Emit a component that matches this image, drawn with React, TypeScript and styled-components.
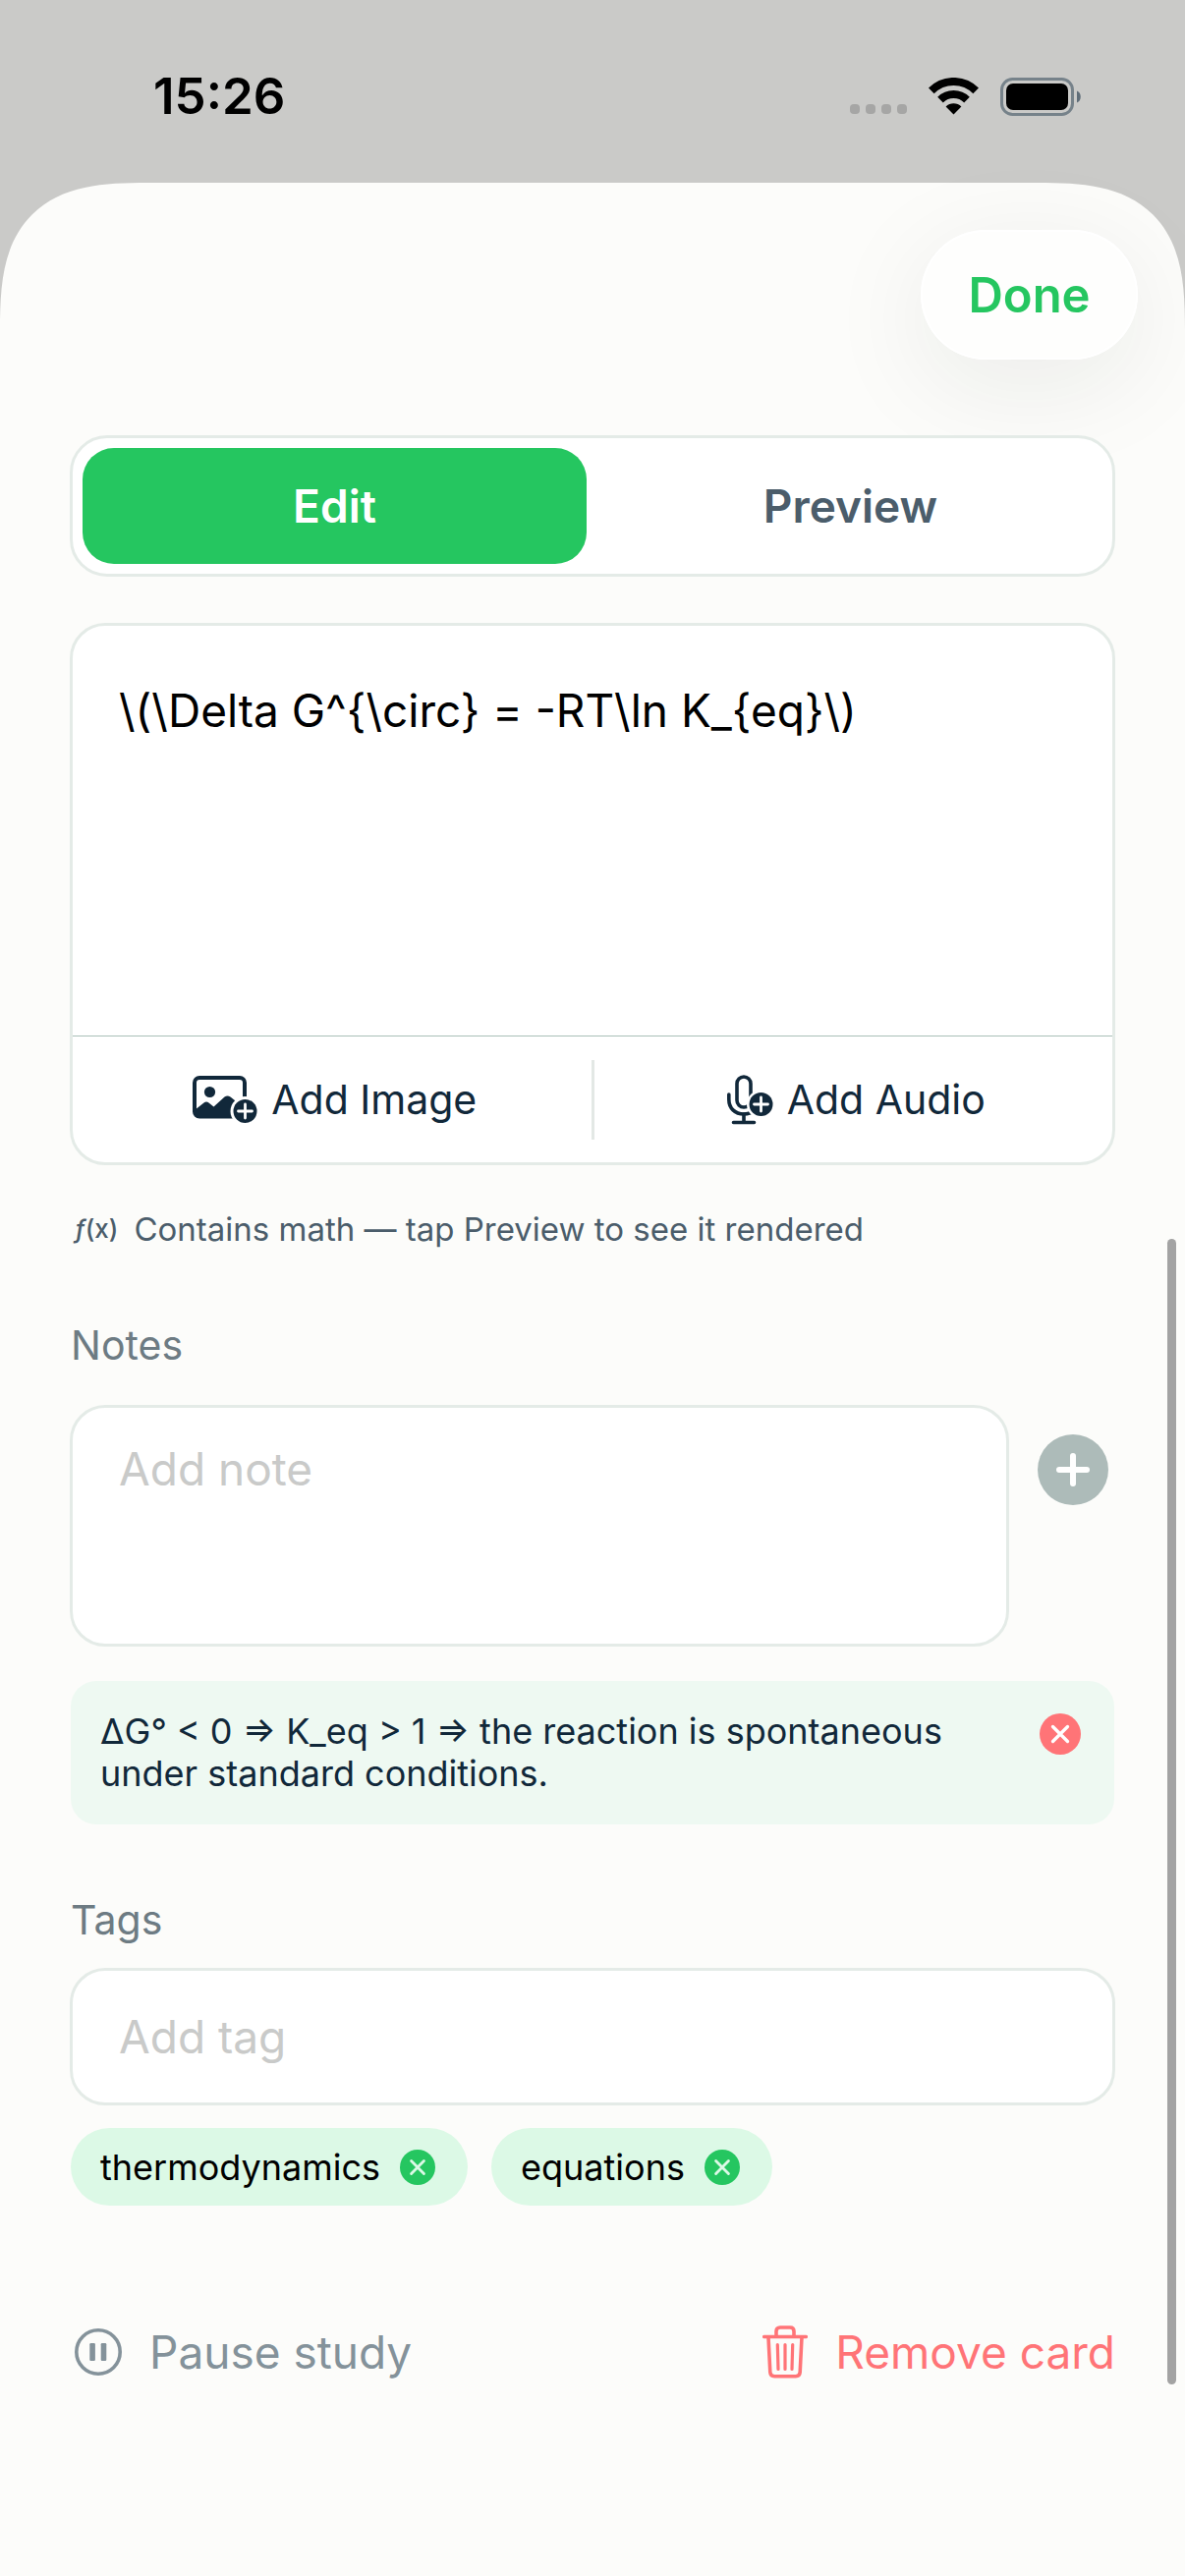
import React, { useState } from "react";
import styled, { createGlobalStyle, css } from "styled-components";

const color = {
  backdrop: "#cacac8",
  sheet: "#fcfcfa",
  line: "#e4ebe7",
  green: "#25c660",
  ink: "#11283a",
  slate: "#4b5d6b",
  label: "#6d7b83",
  muted: "#84929a",
  hint: "#c9cac9",
  coral: "#ff7477",
};

const GlobalStyle = createGlobalStyle`
  *, *::before, *::after { box-sizing: border-box; }
  body {
    margin: 0;
    background: ${color.backdrop};
    font-family: Inter, "Liberation Sans", sans-serif;
    color: #000;
  }
  button, input, textarea { font: inherit; color: inherit; margin: 0; }
  button { border: 0; padding: 0; background: none; cursor: pointer; }
  svg { display: block; flex: none; }
`;

const Screen = styled.div`
  position: relative;
  display: flex;
  flex-direction: column;
  min-height: 100vh;
`;

const StatusBar = styled.header`
  display: flex;
  align-items: center;
  justify-content: space-between;
  height: 186px;
  padding: 10px 105px 0 156px;
`;

const Clock = styled.time`
  font-size: 51px;
  line-height: 60px;
  font-weight: 600;
`;

const StatusIcons = styled.div`
  display: flex;
  align-items: center;
  gap: 22px;
`;

const Sheet = styled.main`
  flex: 1;
  background: ${color.sheet};
  border-radius: 112px 112px 0 0;
  @supports (corner-shape: superellipse(1.5)) {
    border-radius: 150px 150px 0 0;
    corner-shape: superellipse(1.5);
  }
`;

const SheetHeader = styled.div`
  display: flex;
  justify-content: flex-end;
  padding: 48px 48px 0;
`;

const DoneButton = styled.button`
  width: 221px;
  height: 132px;
  padding-top: 2px;
  border-radius: 66px;
  background: #fefefd;
  box-shadow: 0 0 0 2px #fff inset, 0 24px 110px rgba(20, 40, 30, 0.08);
  color: ${color.green};
  font-size: 49px;
  line-height: 60px;
  font-weight: 600;
`;

const Content = styled.div`
  display: flex;
  flex-direction: column;
  padding: 77px 71px 0;
`;

const Segmented = styled.div`
  display: grid;
  grid-template-columns: 1fr 1fr;
  gap: 12px;
  height: 144px;
  padding: 10px;
  border: 3px solid ${color.line};
  border-radius: 38px;
  background: #fff;
`;

const Segment = styled.button<{ $active: boolean }>`
  border-radius: 32px;
  font-size: 46px;
  line-height: 60px;
  font-weight: 600;
  color: ${(p) => (p.$active ? "#fff" : color.slate)};
  background: ${(p) => (p.$active ? color.green : "transparent")};
`;

const field = css`
  border: 3px solid ${color.line};
  border-radius: 36px;
  background: #fff;
`;

const Editor = styled.section`
  ${field}
  display: flex;
  flex-direction: column;
  margin-top: 47px;
  overflow: hidden;
`;

const EditorText = styled.textarea`
  display: block;
  height: 417px;
  padding: 56px 47px;
  border: 0;
  outline: 0;
  resize: none;
  background: transparent;
  font-size: 46px;
  line-height: 60px;
`;

const EditorTools = styled.div`
  display: grid;
  grid-template-columns: 1fr 3px 1fr;
  align-items: center;
  height: 129px;
  border-top: 1px solid #a9c0b7;
`;

const ToolDivider = styled.span`
  height: 81px;
  background: #e3e8e5;
`;

const ToolButton = styled.button`
  display: flex;
  align-items: center;
  justify-content: center;
  gap: 14px;
  padding-left: 6px;
  color: ${color.ink};
  font-size: 41px;
  line-height: 52px;
`;

const MathHint = styled.p`
  display: flex;
  align-items: center;
  gap: 16px;
  margin: 43px 0 0 5px;
  color: ${color.slate};
  font-size: 33px;
  line-height: 44px;
`;

const FunctionMark = styled.span`
  font-size: 26px;
  font-weight: 500;
`;

const Label = styled.label<{ $top: number; $bottom: number }>`
  margin: ${(p) => p.$top}px 0 ${(p) => p.$bottom}px 1px;
  color: ${color.label};
  font-size: 41px;
  line-height: 52px;
`;

const NoteRow = styled.div`
  display: flex;
  align-items: flex-start;
  gap: 29px;
`;

const NoteInput = styled.textarea`
  ${field}
  flex: 1;
  min-width: 0;
  height: 246px;
  padding: 32px 47px;
  outline: 0;
  resize: none;
  font-size: 46px;
  line-height: 60px;
  &::placeholder { color: ${color.hint}; opacity: 1; }
`;

const AddNoteButton = styled.button`
  margin: 30px 7px 0 0;
  border-radius: 50%;
`;

const NoteCard = styled.article`
  display: flex;
  align-items: flex-start;
  justify-content: space-between;
  gap: 80px;
  margin: 35px 1px 0;
  padding: 30px 34px 30px 30px;
  border-radius: 26px;
  background: #eef9f2;
`;

const NoteText = styled.p`
  margin: 0;
  color: ${color.ink};
  font-size: 36px;
  line-height: 43px;
`;

const RoundButton = styled.button`
  margin-top: 3px;
  border-radius: 50%;
`;

const TagInput = styled.input`
  ${field}
  height: 140px;
  padding: 0 47px;
  outline: 0;
  font-size: 46px;
  line-height: 60px;
  &::placeholder { color: ${color.hint}; opacity: 1; }
`;

const TagList = styled.ul`
  display: flex;
  flex-wrap: wrap;
  gap: 24px;
  margin: 23px 1px 0;
  padding: 0;
  list-style: none;
`;

const Tag = styled.li`
  display: flex;
  align-items: center;
  gap: 20px;
  height: 79px;
  padding: 0 33px 0 30px;
  border-radius: 40px;
  background: #dcf9e6;
  font-size: 36px;
  line-height: 44px;
`;

const TagRemove = styled.button`
  border-radius: 50%;
`;

const Footer = styled.footer`
  display: flex;
  align-items: center;
  justify-content: space-between;
  margin: 119px 0 0 5px;
`;

const FooterButton = styled.button<{ $tone: string }>`
  display: flex;
  align-items: center;
  gap: 28px;
  color: ${(p) => p.$tone};
  font-size: 46px;
  line-height: 60px;
`;

const ScrollThumb = styled.div`
  position: absolute;
  top: 1261px;
  right: 9px;
  width: 9px;
  height: 1166px;
  border-radius: 5px;
  background: #a3a3a3;
`;

const DotsIcon = styled.svg`
  align-self: flex-end;
`;

const SignalDots = () => (
  <DotsIcon width="58" height="12" viewBox="0 0 58 12" fill="#a6a6a5">
    {[0, 16, 32, 48].map((x) => (
      <rect key={x} x={x} width="10" height="10" rx="4" />
    ))}
  </DotsIcon>
);

const Wifi = () => (
  <svg width="51" height="38" viewBox="0 0 51 38" fill="none" stroke="#000" strokeWidth="8">
    <path d="M2.8 13.4 A32 32 0 0 1 48.2 13.4" />
    <path d="M12 22.6 A19.2 19.2 0 0 1 39 22.6" />
    <path d="M25.500 37.500 L17.600 29.400 A11.500 11.500 0 0 1 33.400 29.400 Z" fill="#000" stroke="none" />
  </svg>
);

const Battery = () => (
  <svg width="83" height="39" viewBox="0 0 83 39">
    <rect x="1.500" y="1.500" width="72" height="36" rx="11" fill="none" stroke="#76828a" strokeWidth="3" />
    <rect x="6" y="6" width="63" height="27" rx="7" />
    <path d="M78 13.500 C83 15 83 24 78 25.500 Z" fill="#5f6d78" />
  </svg>
);

const ImagePlus = () => (
  <svg width="66" height="49" viewBox="0 0 66 49">
    <rect x="2" y="2" width="51" height="39.500" rx="5" fill="none" stroke="currentColor" strokeWidth="4" />
    <circle cx="17.500" cy="16.500" r="5.600" fill="currentColor" />
    <path
      d="M2 35 L11.500 27.500 Q14 25.500 16.500 27.500 L21.500 31.500 L32.500 21.500 Q35.500 19.300 38.500 21.500 L53 33 V38 Q53 42 49 42 H6 Q2 42 2 38 Z"
      fill="currentColor"
    />
    <circle cx="53.500" cy="36" r="15" fill="#fff" />
    <circle cx="53.500" cy="36" r="12" fill="currentColor" />
    <path d="M53.500 29 V43 M46.500 36 H60.500" stroke="#fff" strokeWidth="2.800" strokeLinecap="round" />
  </svg>
);

const MicPlus = () => (
  <svg width="47" height="51" viewBox="0 0 47 51">
    <g fill="none" stroke="currentColor" strokeWidth="3.600" strokeLinecap="round">
      <rect x="10" y="2" width="14" height="31" rx="7" />
      <path d="M1.800 20 V25 C1.800 34 8 40 17 40 C26 40 32 34 32.300 25" />
      <path d="M17 40 V48.500 M6.500 48.500 H27.500" />
    </g>
    <circle cx="34.500" cy="30" r="14.500" fill="#fff" />
    <circle cx="34.500" cy="30" r="12" fill="currentColor" />
    <path d="M34.500 23 V37 M27.500 30 H41.500" stroke="#fff" strokeWidth="2.800" strokeLinecap="round" />
  </svg>
);

const PlusCircle = () => (
  <svg width="72" height="72" viewBox="0 0 72 72">
    <circle cx="36" cy="36" r="36" fill="#adbbb9" />
    <path d="M36 22 V50 M22 36 H50" stroke="#fff" strokeWidth="6" strokeLinecap="round" />
  </svg>
);

const CloseCircle = ({ size, fill, mark }: { size: number; fill: string; mark: string }) => (
  <svg width={size} height={size} viewBox="0 0 42 42">
    <circle cx="21" cy="21" r="21" fill={fill} />
    <path d="M13.500 13.500 L28.500 28.500 M28.500 13.500 L13.500 28.500" stroke={mark} strokeWidth="3.300" strokeLinecap="round" />
  </svg>
);

const PauseCircle = () => (
  <svg width="48" height="48" viewBox="0 0 48 48">
    <circle cx="24" cy="24" r="22.200" fill="none" stroke="currentColor" strokeWidth="3.600" />
    <rect x="15.300" y="15" width="5.600" height="18" rx="1.200" fill="currentColor" />
    <rect x="26.700" y="15" width="5.600" height="18" rx="1.200" fill="currentColor" />
  </svg>
);

const Trash = () => (
  <svg width="46" height="54" viewBox="0 0 46 54" fill="none" stroke="currentColor" strokeLinecap="round">
    <path d="M1.700 11.500 H44.300" strokeWidth="3.600" />
    <path d="M14 11 V6 Q14 2 18 2 H28 Q32 2 32 6 V11" strokeWidth="3.600" />
    <path d="M6 12 L7.800 47.500 Q8 51.700 12.200 51.700 H33.800 Q38 51.700 38.200 47.500 L40 12" strokeWidth="3.600" />
    <path d="M15.300 19.500 L16 44.500 M23 19.500 V44.500 M30.700 19.500 L30 44.500" strokeWidth="3.200" />
  </svg>
);

export default function App() {
  const [mode, setMode] = useState<"Edit" | "Preview">("Edit");
  const [tags, setTags] = useState(["thermodynamics", "equations"]);

  return (
    <>
      <GlobalStyle />
      <Screen>
        <StatusBar>
          <Clock>15:26</Clock>
          <StatusIcons>
            <SignalDots />
            <Wifi />
            <Battery />
          </StatusIcons>
        </StatusBar>
        <Sheet>
          <SheetHeader>
            <DoneButton>Done</DoneButton>
          </SheetHeader>
          <Content>
            <Segmented>
              {(["Edit", "Preview"] as const).map((name) => (
                <Segment key={name} $active={mode === name} aria-pressed={mode === name} onClick={() => setMode(name)}>
                  {name}
                </Segment>
              ))}
            </Segmented>

            <Editor>
              <EditorText aria-label="Card text" spellCheck={false} defaultValue={"\\(\\Delta G^{\\circ} = -RT\\ln K_{eq}\\)"} />
              <EditorTools>
                <ToolButton>
                  <ImagePlus />
                  Add Image
                </ToolButton>
                <ToolDivider />
                <ToolButton>
                  <MicPlus />
                  Add Audio
                </ToolButton>
              </EditorTools>
            </Editor>

            <MathHint>
              <FunctionMark>
                <i>ƒ</i>(x)
              </FunctionMark>
              Contains math — tap Preview to see it rendered
            </MathHint>

            <Label htmlFor="note" $top={70} $bottom={35}>Notes</Label>
            <NoteRow>
              <NoteInput id="note" placeholder="Add note" />
              <AddNoteButton aria-label="Save note">
                <PlusCircle />
              </AddNoteButton>
            </NoteRow>
            <NoteCard>
              <NoteText>ΔG° &lt; 0 ⇒ K_eq &gt; 1 ⇒ the reaction is spontaneous under standard conditions.</NoteText>
              <RoundButton aria-label="Delete note">
                <CloseCircle size={42} fill={color.coral} mark="#fff" />
              </RoundButton>
            </NoteCard>

            <Label htmlFor="tag" $top={71} $bottom={23}>Tags</Label>
            <TagInput id="tag" type="text" placeholder="Add tag" />
            <TagList>
              {tags.map((tag) => (
                <Tag key={tag}>
                  {tag}
                  <TagRemove aria-label={`Remove ${tag}`} onClick={() => setTags(tags.filter((t) => t !== tag))}>
                    <CloseCircle size={36} fill={color.green} mark="#dcf9e6" />
                  </TagRemove>
                </Tag>
              ))}
            </TagList>

            <Footer>
              <FooterButton $tone={color.muted}>
                <PauseCircle />
                Pause study
              </FooterButton>
              <FooterButton $tone={color.coral}>
                <Trash />
                Remove card
              </FooterButton>
            </Footer>
          </Content>
        </Sheet>
        <ScrollThumb />
      </Screen>
    </>
  );
}
